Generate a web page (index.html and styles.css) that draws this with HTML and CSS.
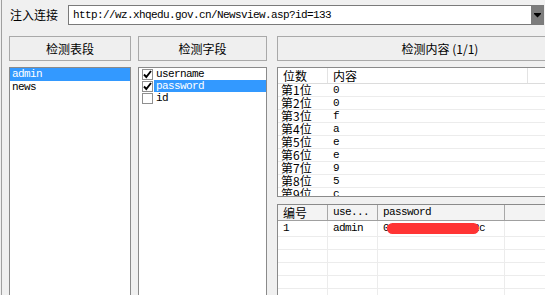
FILE: index.html
```html
<!DOCTYPE html>
<html lang="zh-CN">
<head>
    <meta charset="UTF-8" />
    <title>注入检测</title>
    <link rel="stylesheet" href="styles.css">
</head>
<body>
<div class="window">
    <div class="url-row">
        <span class="url-label">注入连接</span>
        <div class="url-box">
            <span class="url-text">http://wz.xhqedu.gov.cn/Newsview.asp?id=133</span>
            <span class="drop">
                <svg width="7" height="5" viewBox="0 0 7 5"><rect x="0" y="0" width="7" height="1" fill="#000"/><path d="M0 1 H7 L3.5 4.5 Z" fill="#000"/></svg>
            </span>
        </div>
    </div>

    <div class="panels">
        <div class="col col-tables">
            <button class="head-btn">检测表段</button>
            <ul class="listbox">
                <li class="selected">admin</li>
                <li>news</li>
            </ul>
        </div>

        <div class="col col-fields">
            <button class="head-btn">检测字段</button>
            <ul class="listbox checks">
                <li><span class="box checked"><svg width="9" height="9" viewBox="0 0 9 9"><path d="M1 4.5 L3.3 7 L8 1" fill="none" stroke="#000" stroke-width="1.9"/></svg></span><span class="label">username</span></li>
                <li><span class="box checked"><svg width="9" height="9" viewBox="0 0 9 9"><path d="M1 4.5 L3.3 7 L8 1" fill="none" stroke="#000" stroke-width="1.9"/></svg></span><span class="label selected">password</span></li>
                <li><span class="box"></span><span class="label">id</span></li>
            </ul>
        </div>

        <div class="col col-content">
            <button class="head-btn">检测内容 (1/1)</button>
            <div class="grid grid-bits">
                <div class="grid-head">
                    <span>位数</span><span>内容</span><span></span>
                </div>
                <div class="grid-row"><span class="cjk">第1位</span><span>0</span><span></span></div>
                <div class="grid-row"><span class="cjk">第2位</span><span>0</span><span></span></div>
                <div class="grid-row"><span class="cjk">第3位</span><span>f</span><span></span></div>
                <div class="grid-row"><span class="cjk">第4位</span><span>a</span><span></span></div>
                <div class="grid-row"><span class="cjk">第5位</span><span>e</span><span></span></div>
                <div class="grid-row"><span class="cjk">第6位</span><span>e</span><span></span></div>
                <div class="grid-row"><span class="cjk">第7位</span><span>9</span><span></span></div>
                <div class="grid-row"><span class="cjk">第8位</span><span>5</span><span></span></div>
                <div class="grid-row"><span class="cjk">第9位</span><span>c</span><span></span></div>
            </div>

            <div class="grid grid-dump">
                <div class="grid-head">
                    <span class="cjk">编号</span><span>use...</span><span>password</span><span></span>
                </div>
                <div class="grid-row first"><span>1</span><span>admin</span><span class="secret">00faee95d3b1f7a2c<i class="redact"></i></span><span></span></div>
                <div class="grid-row"><span></span><span></span><span></span><span></span></div>
                <div class="grid-row"><span></span><span></span><span></span><span></span></div>
                <div class="grid-row"><span></span><span></span><span></span><span></span></div>
                <div class="grid-row"><span></span><span></span><span></span><span></span></div>
                <div class="grid-row"><span></span><span></span><span></span><span></span></div>
            </div>
        </div>
    </div>
</div>
</body>
</html>
```

FILE: styles.css
```css
body {
    margin: 0;
    padding: 0;
    background-color: #f0f0f0;
    overflow: hidden;
    font-family: "Noto Sans CJK SC", sans-serif;
    font-size: 12px;
    color: #000;
}
.window {
    width: 640px;
    height: 295px;
    margin-left: 1px;
    border-left: 1px solid #a0a0a0;
    overflow: hidden;
}
.url-row {
    display: flex;
    align-items: center;
    padding: 5px 0 0 8px;
    height: 20px;
}
.url-label {
    width: 58px;
    line-height: 20px;
}
.url-box {
    display: flex;
    align-items: stretch;
    width: 476px;
    height: 20px;
    box-sizing: border-box;
    border: 1px solid #7a7a7a;
    background: #fff;
}
.url-text {
    flex: 1;
    padding-left: 4px;
    font-family: "Liberation Mono", monospace;
    font-size: 11px;
    letter-spacing: -0.6px;
    line-height: 18px;
}
.drop {
    width: 12px;
    background: #7c7c7c;
    display: flex;
    align-items: center;
    justify-content: center;
}

.panels {
    display: flex;
    margin-top: 11px;
    padding-left: 7px;
}
.col {
    display: flex;
    flex-direction: column;
}
.col-tables { width: 122px; margin-right: 7px; }
.col-fields { width: 129px; margin-right: 10px; }
.col-content { width: 326px; }

.head-btn {
    height: 25px;
    margin: 0 0 6px 0;
    padding: 0;
    background: #efefef;
    border: 1px solid #a9a9a9;
    font-family: "Noto Sans CJK SC", sans-serif;
    font-size: 12px;
    color: #000;
}

.listbox {
    list-style: none;
    margin: 0;
    padding: 0;
    height: 240px;
    background: #fff;
    border: 1px solid #8a8a8a;
    font-family: "Liberation Mono", monospace;
    font-size: 11px;
    letter-spacing: -0.6px;
}
.listbox li {
    height: 13px;
    line-height: 13px;
    padding-left: 2px;
}
.listbox li.selected,
.listbox .label.selected {
    background: #3399ff;
    color: #fff;
}
.checks li {
    display: flex;
    align-items: center;
    height: 12px;
    line-height: 12px;
    padding-left: 3px;
}
.checks .box {
    width: 11px;
    height: 11px;
    box-sizing: border-box;
    border: 1px solid #8f8f8f;
    background: #fff;
    display: flex;
    align-items: center;
    justify-content: center;
    margin-right: 1px;
}
.checks .label {
    flex: 1;
    padding-left: 2px;
    height: 12px;
}

.grid {
    background: #fff;
    border: 1px solid #8a8a8a;
    overflow: hidden;
}
.grid-bits {
    height: 130px;
    box-sizing: border-box;
    margin-bottom: 7px;
}
.grid-dump {
    height: 100px;
}
.grid-head,
.grid-row {
    display: grid;
    grid-template-columns: 50px 200px 1fr;
}
.grid-dump .grid-head,
.grid-dump .grid-row {
    grid-template-columns: 50px 50px 127px 1fr;
}
.grid-head {
    height: 15px;
    line-height: 15px;
    border-bottom: 1px solid #dcdcdc;
}
.grid-head span {
    padding-left: 5px;
    border-right: 1px solid #e3e3e3;
}
.grid-dump .grid-head {
    background: #f3f3f3;
    border-bottom: 1px solid #a0a0a0;
}
.grid-dump .grid-head span {
    border-right: 1px solid #a8a8a8;
}
.grid-dump .grid-head span:nth-child(2),
.grid-dump .grid-head span:nth-child(3) {
    font-family: "Liberation Mono", monospace;
    font-size: 11px;
    letter-spacing: -0.6px;
}
.grid-row {
    height: 12px;
    line-height: 12px;
    border-bottom: 1px solid #ececec;
    font-family: "Liberation Mono", monospace;
    font-size: 11px;
    letter-spacing: -0.6px;
}
.grid-row span {
    padding-left: 5px;
    white-space: nowrap;
}
.grid-row .cjk {
    padding-left: 3px;
    font-family: "Noto Sans CJK SC", sans-serif;
    font-size: 12px;
    letter-spacing: 0;
}
.grid-dump .grid-row span {
    border-right: 1px solid #ececec;
}
.grid-dump .grid-row.first {
    height: 15px;
    line-height: 15px;
}
.secret {
    position: relative;
}
.redact {
    position: absolute;
    left: 9px;
    top: 2px;
    width: 92px;
    height: 11px;
    border-radius: 6px;
    background: #ff3434;
}
```
